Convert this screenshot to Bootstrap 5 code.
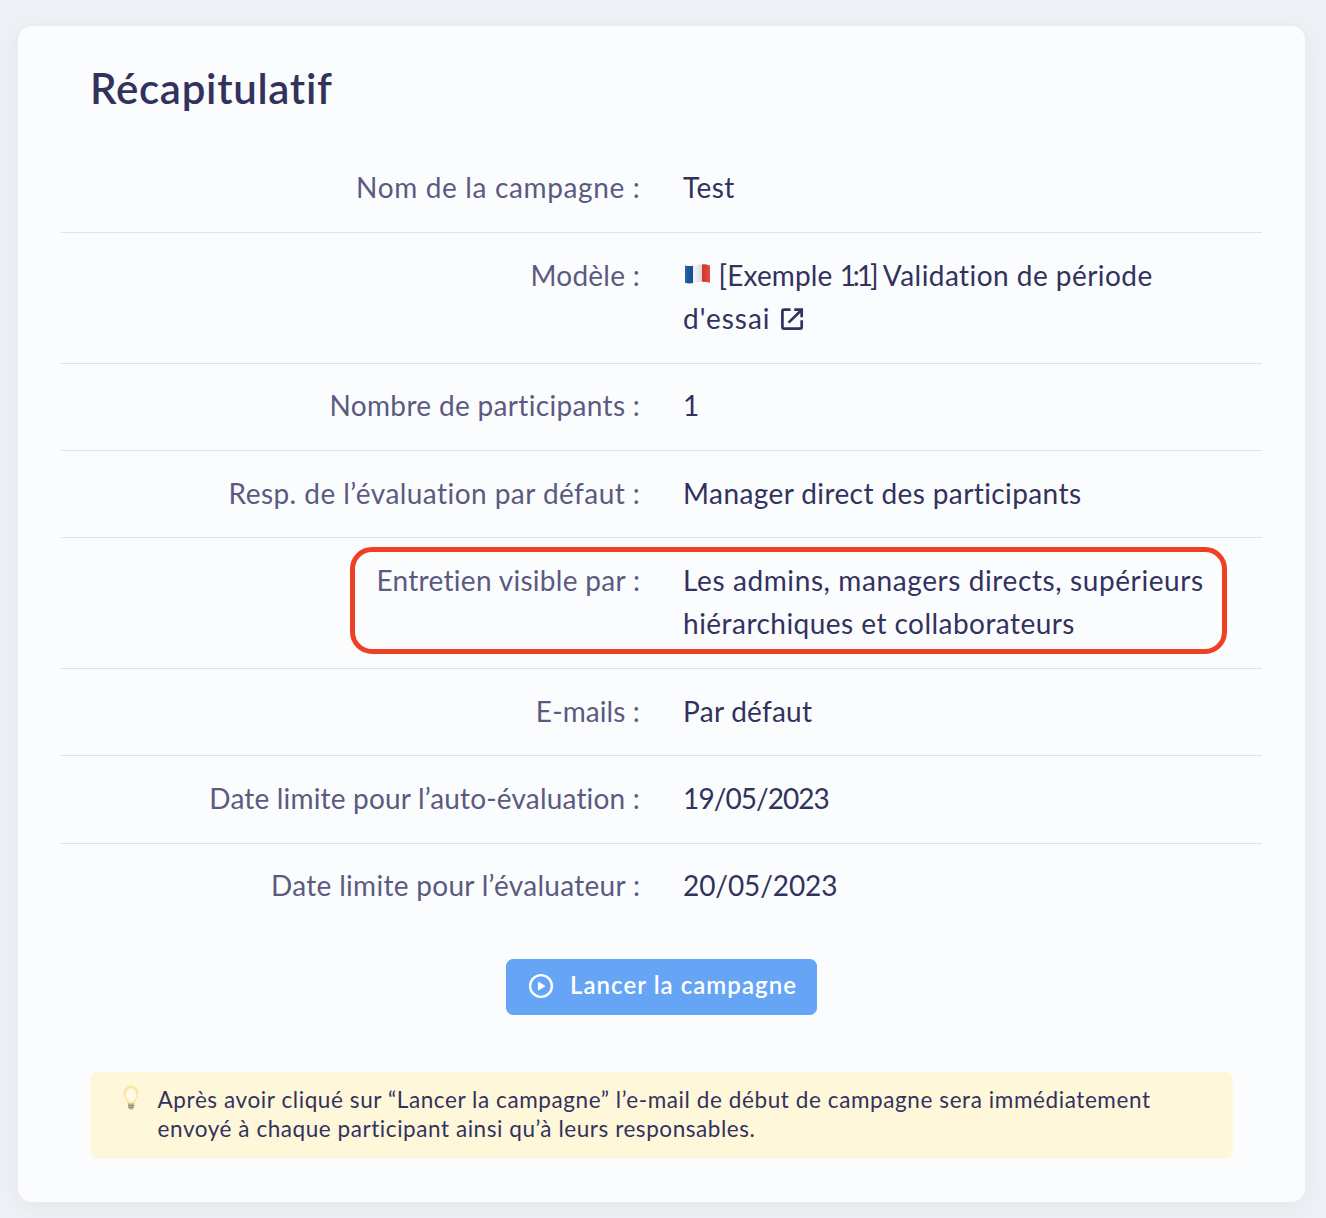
<!DOCTYPE html>
<html lang="fr">
<head>
<meta charset="utf-8">
<meta name="viewport" content="width=device-width, initial-scale=1">
<title>Récapitulatif</title>
<link href="https://cdn.jsdelivr.net/npm/bootstrap@5.3.0/dist/css/bootstrap.min.css" rel="stylesheet">
<style>
  body { background: #eff0f5; color: #32325d; font-family: Lato, "Open Sans", sans-serif; font-variant-ligatures: none; height: 1218px; overflow: hidden; padding: 26px 21px 16px 18px; }
  .recap { background: #fbfcfe; border: 0; border-radius: 14px; height: 1176px; box-shadow: 0 4px 22px rgba(50, 50, 93, .05); padding: 0 43px; }
  .recap-title { font-size: 42px; line-height: 50px; font-weight: 600; margin: 37px 0 32.6px 29px; letter-spacing: .7px; }
  .recap-line { font-size: 28px; line-height: 43.2px; padding: 20.6px 0 22.6px; border-bottom: 1px solid #dce6e8; }
  .recap-line:last-child { border-bottom: 0; }
  .recap-line > .col-6 { padding: 0 21.6px; white-space: nowrap; }
  .recap-key { color: #5b5a80; }
  .k1 { letter-spacing: .65px; margin-right: -.6px; } .k2 { letter-spacing: .25px; } .k3 { letter-spacing: .33px; margin-right: -.3px; } .k4 { letter-spacing: .45px; margin-right: -.4px; }
  .k5 { letter-spacing: .3px; margin-right: -.3px; } .k6 { letter-spacing: .1px; } .k7 { letter-spacing: .18px; } .k8 { letter-spacing: .3px; margin-right: -.3px; }
  .v1 { letter-spacing: .4px; } .v2a { letter-spacing: .1px; } .v2b { letter-spacing: -3px; } .v2c { letter-spacing: .45px; }
  .v3 { letter-spacing: 1px; } .v5 { letter-spacing: .4px; } .v6 { letter-spacing: .6px; } .v7 { letter-spacing: .46px; }
  .v8 { letter-spacing: .25px; } .v9 { letter-spacing: -.95px; } .v10 { letter-spacing: -.1px; }
  .flag { width: 27px; height: 20px; margin: 0 8px 0 .5px; vertical-align: 2px; }
  .ext { width: 24px; height: 24px; margin-left: 9px; vertical-align: -2px; }
  .outlined::after { content: ""; position: absolute; left: 289px; right: 35px; top: 9px; bottom: 14px; border: 5px solid #ee4124; border-radius: 22px; }
  .launch { --bs-btn-bg: #66a5f5; --bs-btn-color: #fff; --bs-btn-border-color: #66a5f5; --bs-btn-hover-bg: #4f93ea; --bs-btn-hover-color: #fff; width: 311px; height: 56px; border-radius: 7px; font-size: 24px; font-weight: 600; letter-spacing: 1.05px; margin-top: 29px; padding: 0 19px 4px 21px; white-space: nowrap; }
  .launch svg { width: 26px; height: 26px; margin-top: 2px; }
  .tip { background: #fef7da; border-radius: 8px; height: 87px; margin: 57px 29px 0; padding: 13px 30px; font-size: 22.5px; line-height: 29px; white-space: nowrap; }
  .tip svg { width: 22px; height: 26px; margin: 0 15.6px 0 0; }
  .t1 { letter-spacing: .59px; } .t2 { letter-spacing: .56px; }
</style>
</head>
<body>
<main class="card recap">
  <h1 class="recap-title">Récapitulatif</h1>
  <div>
    <div class="row g-0 recap-line"><div class="col-6 text-end recap-key"><span class="k1">Nom de la campagne :</span></div><div class="col-6"><span class="v1">Test</span></div></div>
    <div class="row g-0 recap-line"><div class="col-6 text-end recap-key"><span class="k2">Modèle :</span></div><div class="col-6"><svg class="flag" viewBox="0 0 27 20" aria-label="France"><defs><linearGradient id="wave"><stop offset="0" stop-color="#fff" stop-opacity=".12"/><stop offset=".4" stop-color="#000" stop-opacity="0"/><stop offset=".65" stop-color="#000" stop-opacity=".09"/><stop offset="1" stop-color="#fff" stop-opacity=".1"/></linearGradient></defs><path fill="#12509b" d="M1 1.4Q5 2.6 9 1.7V19Q5 19.9 1 18.8z"/><path fill="#f1f1f3" d="M9 1.7Q14 .3 18 .4V17.7Q14 17.7 9 19z"/><path fill="#e5392d" d="M18 .4Q22 0 26 1.4V18.8Q22 17.5 18 17.7z"/><path fill="url(#wave)" d="M1 1.4Q5 2.6 9 1.7Q14 .3 18 .4Q22 0 26 1.4V18.8Q22 17.5 18 17.7Q14 17.7 9 19Q5 19.9 1 18.8z"/></svg><span class="v2a">[Exemple </span><span class="v2b">1:1]</span> <span class="v2c">Validation de période</span><br><span class="v3">d'essai</span><svg class="ext" viewBox="0 0 24 24" fill="none" stroke="#32325d" stroke-width="2.7"><path d="M10.5 2.6H4Q2.4 2.6 2.4 4.2V20Q2.4 21.6 4 21.6H20Q21.7 21.6 21.7 20V13.2M14.2 2.6H21.7V10.2M21.2 3.2L8.6 15.6"/></svg></div></div>
    <div class="row g-0 recap-line"><div class="col-6 text-end recap-key"><span class="k3">Nombre de participants :</span></div><div class="col-6"><span class="v4">1</span></div></div>
    <div class="row g-0 recap-line"><div class="col-6 text-end recap-key"><span class="k4">Resp. de l’évaluation par défaut :</span></div><div class="col-6"><span class="v5">Manager direct des participants</span></div></div>
    <div class="row g-0 recap-line position-relative outlined"><div class="col-6 text-end recap-key"><span class="k5">Entretien visible par :</span></div><div class="col-6"><span class="v6">Les admins, managers directs, supérieurs</span><br><span class="v7">hiérarchiques et collaborateurs</span></div></div>
    <div class="row g-0 recap-line"><div class="col-6 text-end recap-key"><span class="k6">E-mails :</span></div><div class="col-6"><span class="v8">Par défaut</span></div></div>
    <div class="row g-0 recap-line"><div class="col-6 text-end recap-key"><span class="k7">Date limite pour l’auto-évaluation :</span></div><div class="col-6"><span class="v9">19/05/2023</span></div></div>
    <div class="row g-0 recap-line"><div class="col-6 text-end recap-key"><span class="k8">Date limite pour l’évaluateur :</span></div><div class="col-6"><span class="v10">20/05/2023</span></div></div>
  </div>
  <button type="button" class="btn launch d-flex align-items-center justify-content-between align-self-center"><svg viewBox="0 0 26 26" aria-hidden="true"><circle cx="13" cy="13" r="10.9" fill="none" stroke="#fff" stroke-width="2.4"/><path fill="#fff" stroke="#fff" stroke-width="1" stroke-linejoin="round" d="M10.4 9.2V17L16.8 13.1z"/></svg><span>Lancer la campagne</span></button>
  <div class="tip d-flex align-items-start"><svg viewBox="0 0 22 26" aria-hidden="true"><defs><radialGradient id="glow" cx=".5" cy=".5" r=".6"><stop offset="0" stop-color="#fffef8"/><stop offset=".55" stop-color="#fff8dc"/><stop offset="1" stop-color="#f8d873"/></radialGradient></defs><path fill="url(#glow)" stroke="#f5dc8c" stroke-width=".8" d="M11 1.6C6.8 1.6 4.3 4.5 4.3 8.2C4.3 12.3 7.3 13.8 8 18.5H14.2C14.8 13.8 17.8 12.3 17.8 8.2C17.8 4.5 15.2 1.6 11 1.6z"/><path fill="#b9b49b" d="M8 18.5H14.2V22Q14 24 11.1 24.8Q8.2 24 8 22z"/><path stroke="#85836f" stroke-width=".8" d="M8.2 20.5H14M8.6 22.6H13.6"/></svg><div><span class="t1">Après avoir cliqué sur “Lancer la campagne” l’e-mail de début de campagne sera immédiatement</span><br><span class="t2">envoyé à chaque participant ainsi qu’à leurs responsables.</span></div></div>
</main>
<script src="https://cdn.jsdelivr.net/npm/bootstrap@5.3.0/dist/js/bootstrap.bundle.min.js"></script>
</body>
</html>
